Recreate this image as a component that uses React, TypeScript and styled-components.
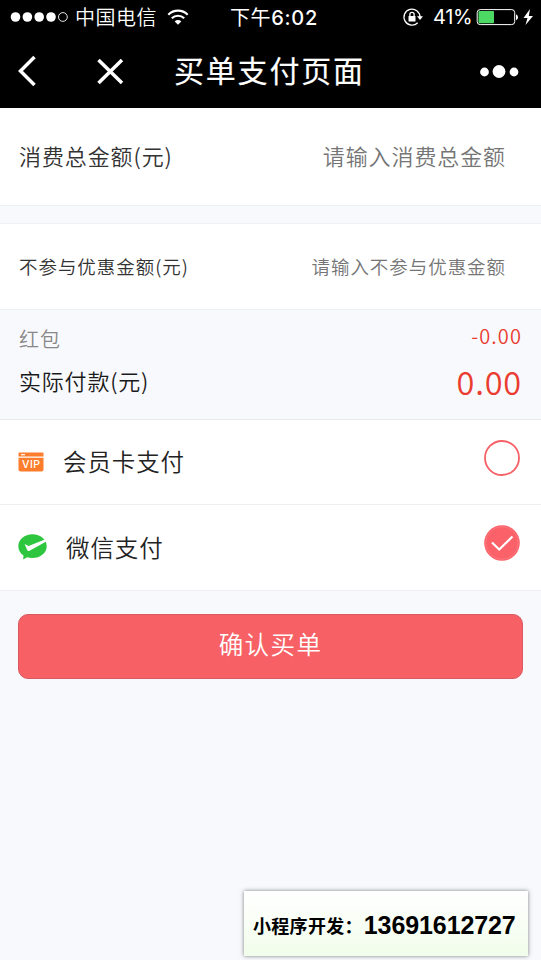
import React from "react";
import styled, { createGlobalStyle } from "styled-components";

const GlobalStyle = createGlobalStyle`
  * { box-sizing: border-box; }
  body {
    margin: 0;
    background: #f8f9fd;
    font-family: "Noto Sans CJK SC", "Noto Sans", sans-serif;
  }
`;

const Screen = styled.main`
  position: relative;
  width: 541px;
  height: 960px;
  overflow: hidden;
  background: #f8f9fd;
  display: flex;
  flex-direction: column;
`;

const Text = styled.span<{ $size: number; $color: string; $spacing?: number; $weight?: number }>`
  font-size: ${(p) => p.$size}px;
  line-height: 1;
  color: ${(p) => p.$color};
  letter-spacing: ${(p) => p.$spacing ?? 0}px;
  font-weight: ${(p) => p.$weight ?? 350};
  white-space: nowrap;
`;

const StatusBar = styled.div`
  height: 34px;
  flex: none;
  background: #000;
  display: grid;
  grid-template-columns: 230px 172px 1fr;
  align-items: center;
`;

const StatusGroup = styled.div`
  display: flex;
  align-items: center;
  height: 34px;
`;

const Signal = styled.svg`
  margin-left: 10px;
  margin-right: 6px;
`;

const Wifi = styled.svg`
  margin-left: 10px;
`;

const Percent = styled(Text)`
  font-family: Inter, Roboto, sans-serif;
  width: 38px;
  margin-left: 9px;
  margin-right: 5px;
`;

const Clock = styled(Text)`
  span {
    font-family: Inter, Roboto, sans-serif;
    font-size: 20px;
    letter-spacing: 0.7px;
    font-weight: 500;
  }
`;

const NavBar = styled.header`
  height: 74px;
  flex: none;
  background: #000;
  display: grid;
  grid-template-columns: 80px 94px 1fr 80px;
  align-items: center;
  svg { display: block; }
`;

const Title = styled(Text)`
  padding-bottom: 4px;
  -webkit-text-stroke: 0.15px #fff;
`;

const Row = styled.div<{ $height: number; $inset?: number; $lift?: number }>`
  height: ${(p) => p.$height}px;
  flex: none;
  background: #fff;
  border-bottom: 1px solid #eeeff1;
  padding: 0 ${(p) => p.$inset ?? 35}px ${(p) => p.$lift ?? 0}px 19px;
  display: flex;
  align-items: center;
  justify-content: space-between;
`;

const Gap = styled.div`
  height: 18px;
  flex: none;
  border-bottom: 1px solid #f1f1f3;
`;

const Summary = styled.section`
  height: 110px;
  flex: none;
  padding: 13px 19px 0;
  border-bottom: 1px solid #e9eaed;
`;

const SummaryLine = styled.div<{ $height: number }>`
  height: ${(p) => p.$height}px;
  display: flex;
  align-items: center;
  justify-content: space-between;
`;

const Discount = styled(Text)`
  padding-bottom: 5px;
`;

const PayLabel = styled(Text)`
  padding-bottom: 3px;
`;

const Method = styled.div<{ $gap: number }>`
  display: flex;
  align-items: center;
  margin-left: -1px;
  gap: ${(p) => p.$gap}px;
  svg { display: block; }
`;

const Radio = styled.svg`
  display: block;
  margin-bottom: 9px;
`;

const Confirm = styled.button`
  margin: 23px 18px 0;
  height: 65px;
  flex: none;
  border: 1px solid #d85a60;
  border-radius: 10px;
  background: #f76166;
  padding: 0 0 5px;
  font-family: inherit;
  display: flex;
  align-items: center;
  justify-content: center;
`;

const ContactCard = styled.aside`
  position: absolute;
  left: 244px;
  top: 891px;
  width: 284px;
  height: 65px;
  padding: 3px 0 0 9px;
  background: linear-gradient(#ffffff, #f1fdea);
  box-shadow: 0 0 4px rgba(0, 0, 0, 0.5);
  display: flex;
  align-items: center;
`;

const Phone = styled(Text)`
  font-family: "Liberation Sans", Arial, sans-serif;
  margin-left: 1px;
`;

const VipIcon = () => (
  <svg width="26" height="20" viewBox="0 0 26 20">
    <path d="M1.500 .5h23q1 0 1 1v3H.5v-3q0-1 1-1z" fill="#fd7d2c" />
    <path d="M.5 5.700h25v11.800q0 2-2 2h-21q-2 0-2-2z" fill="#fd7d2c" />
    <path d="M3 2.700h4" stroke="#fff" strokeWidth="1.200" />
    <text x="13.200" y="16.200" textAnchor="middle" fontFamily="Inter, sans-serif" fontSize="10.500" fontWeight="500" letterSpacing=".4" fill="#fff">VIP</text>
  </svg>
);

const WechatIcon = () => (
  <svg width="29" height="28" viewBox="0 0 29 28">
    <path d="M14.500.3C22.400.3 28.700 5.600 28.700 12.200S22.400 24 14.500 24q-3 0-5.400-.8L5.200 25.600 5.500 21.500C2.300 19.300.3 16 .3 12.200.3 5.600 6.600.3 14.500.3z" fill="#2dc63e" />
    <path d="M6.600 10 10.600 12 26.800 5.600 27.800 7.800 11.600 16.700Q10 17.500 9.200 16z" fill="#fff" />
  </svg>
);

const StatusIcons = () => (
  <svg width="22" height="22" viewBox="0 0 22 22" fill="none" stroke="#fff" strokeWidth="1.300">
    <path d="M15.700 16.700A8 8 0 1 1 18 11" />
    <path d="M15 10.300h6l-3 3.600z" fill="#fff" stroke="none" />
    <rect x="6.500" y="10" width="7" height="5.600" rx=".6" fill="#fff" stroke="none" />
    <path d="M7.900 10V8.500a2.100 2.100 0 0 1 4.200 0V10" />
  </svg>
);

export default function App() {
  return (
    <>
      <GlobalStyle />
      <Screen>
        <StatusBar>
          <StatusGroup>
            <Signal width="59" height="12" viewBox="0 0 59 12" fill="#fff">
              <circle cx="5.500" cy="6" r="4.800" />
              <circle cx="17.400" cy="6" r="4.800" />
              <circle cx="29.200" cy="6" r="4.800" />
              <circle cx="41" cy="6" r="4.800" />
              <circle cx="52.900" cy="6" r="4.400" fill="none" stroke="#fff" strokeWidth=".9" />
            </Signal>
            <Text $size={20} $color="#fff" $spacing={0.5}>中国电信</Text>
            <Wifi width="22" height="17" viewBox="0 0 22 17" fill="none" stroke="#fff" strokeWidth="2.200">
              <path d="M1.300 5.700a13.800 13.800 0 0 1 19.400 0" />
              <path d="M4.800 9.300a8.800 8.800 0 0 1 12.400 0" />
              <path d="M7.700 12.400a4.700 4.700 0 0 1 6.600 0L11 15.800z" fill="#fff" stroke="none" />
            </Wifi>
          </StatusGroup>
          <Clock $size={20} $color="#fff" $spacing={0.6} $weight={400}>下午<span>6:02</span></Clock>
          <StatusGroup>
            <StatusIcons />
            <Percent $size={20} $color="#fff" $spacing={-0.3} $weight={400}>41%</Percent>
            <svg width="58" height="18" viewBox="0 0 58 18">
              <rect x="1.200" y="1.600" width="37.500" height="15" rx="3" fill="none" stroke="#fff" strokeWidth="1" />
              <rect x="2.500" y="3" width="15.500" height="12.300" rx="1" fill="#4cd964" />
              <path d="M40 6.200q2 .8 2 3t-2 3z" fill="#fff" />
              <path d="M54 1 47.500 10h4L49.500 17 57 8h-4.200z" fill="#fff" />
            </svg>
          </StatusGroup>
        </StatusBar>
        <NavBar>
          <svg width="80" height="74" viewBox="0 34 80 74" fill="none" stroke="#fff" strokeWidth="3.500">
            <path d="M34.500 57 20.500 71 34.500 85" />
          </svg>
          <svg width="94" height="74" viewBox="80 34 94 74" stroke="#fff" strokeWidth="3.500">
            <path d="M98.500 60 122 83M122 60 98.500 83" />
          </svg>
          <Title $size={30} $color="#fff" $spacing={1.8} $weight={400}>买单支付页面</Title>
          <svg width="80" height="74" viewBox="461 34 80 74" fill="#fff">
            <circle cx="484.500" cy="72" r="4.400" />
            <circle cx="499" cy="71.500" r="6.400" />
            <circle cx="514" cy="72" r="4.400" />
          </svg>
        </NavBar>
        <Row $height={98} $lift={4}>
          <Text $size={22} $color="#333" $spacing={0.9}>消费总金额(元)</Text>
          <Text $size={22} $color="#757575" $spacing={0.9}>请输入消费总金额</Text>
        </Row>
        <Gap />
        <Row $height={86}>
          <Text $size={18.5} $color="#333" $spacing={0.95}>不参与优惠金额(元)</Text>
          <Text $size={18.5} $color="#757575" $spacing={0.95}>请输入不参与优惠金额</Text>
        </Row>
        <Summary>
          <SummaryLine $height={31}>
            <Text $size={20} $color="#888" $spacing={1}>红包</Text>
            <Discount $size={20} $color="#ea3c30" $spacing={1.1}>-0.00</Discount>
          </SummaryLine>
          <SummaryLine $height={54}>
            <PayLabel $size={22} $color="#1a1a1a" $spacing={0.8}>实际付款(元)</PayLabel>
            <Text $size={32.5} $color="#ea3c30" $spacing={0.8}>0.00</Text>
          </SummaryLine>
        </Summary>
        <Row $height={85} $inset={21}>
          <Method $gap={19}>
            <VipIcon />
            <Text $size={23.5} $color="#222" $spacing={0.9}>会员卡支付</Text>
          </Method>
          <Radio width="36" height="36" viewBox="0 0 36 36">
            <circle cx="18" cy="18" r="17" fill="#fff" stroke="#f76166" strokeWidth="1.800" />
          </Radio>
        </Row>
        <Row $height={86} $inset={21}>
          <Method $gap={19}>
            <WechatIcon />
            <Text $size={23.5} $color="#222" $spacing={0.9}>微信支付</Text>
          </Method>
          <Radio width="36" height="36" viewBox="0 0 36 36">
            <circle cx="18" cy="18" r="17.800" fill="#fb6169" />
            <circle cx="18" cy="18" r="16.300" fill="none" stroke="#fd8a90" strokeWidth=".5" />
            <path d="M8 17.500 15.200 24.500 28.500 11.500" fill="none" stroke="#fff" strokeWidth="2.200" />
          </Radio>
        </Row>
        <Confirm>
          <Text $size={24.5} $color="#fff" $spacing={1.4}>确认买单</Text>
        </Confirm>
        <ContactCard>
          <Text $size={18} $color="#000" $spacing={0.3} $weight={700}>小程序开发：</Text>
          <Phone $size={25} $color="#000" $spacing={-0.1} $weight={700}>13691612727</Phone>
        </ContactCard>
      </Screen>
    </>
  );
}
